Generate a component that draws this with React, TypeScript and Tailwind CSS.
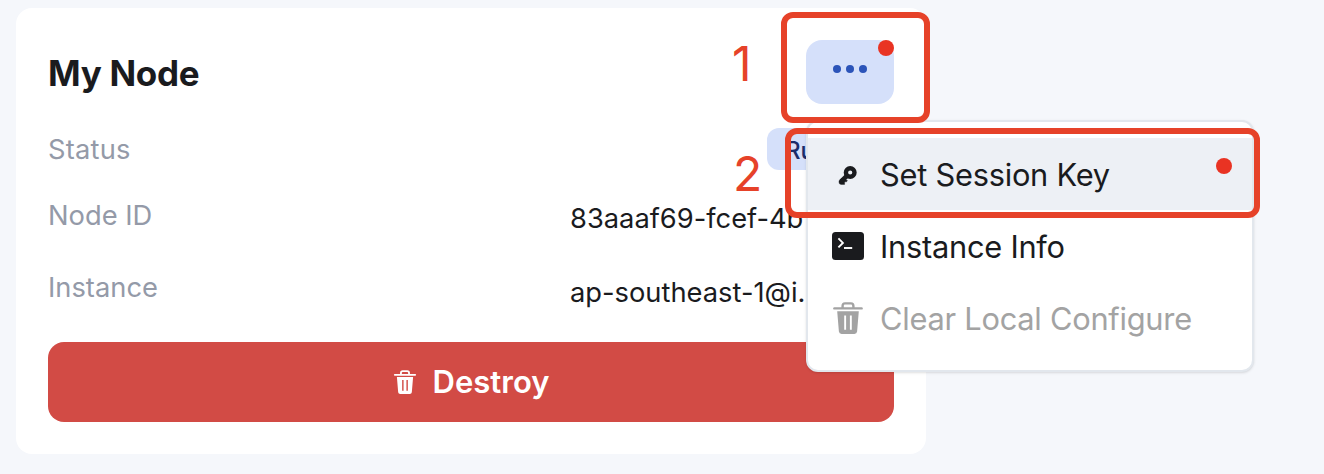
import type { ReactNode } from 'react';

function TrashIcon({ className }: { className: string }) {
  return (
    <svg viewBox="0 0 32 32" className={className} fill="currentColor" aria-hidden="true">
      <path
        fillRule="evenodd"
        d="M5.2 9.2H26.8L25.1 29.5Q24.8 31.9 22.4 31.9H9.6Q7.2 31.9 6.9 29.5ZM12.2 13.4V27.8H14.1V13.4ZM17.9 13.4V27.8H19.8V13.4Z"
      />
      <path d="M2.4 6.4H29.6" fill="none" stroke="currentColor" strokeWidth="2.4" strokeLinecap="round" />
      <path
        d="M10.6 6.3V4Q10.6 1.4 13 1.4H19Q21.4 1.4 21.4 4V6.3"
        fill="none"
        stroke="currentColor"
        strokeWidth="2.4"
      />
    </svg>
  );
}

function KeyIcon() {
  return (
    <svg viewBox="0 0 32 32" className="h-8 w-8" fill="none" stroke="currentColor" aria-hidden="true">
      <circle cx="18.2" cy="14.5" r="4.3" strokeWidth="4.4" />
      <path d="M14.6 18.1L9.2 23.5" strokeWidth="4.6" />
      <path d="M7 22.7L9.8 20.3L15.4 22.4L14.6 23.8H12.6V26.4H9Q7 26.4 7 24.3Z" fill="currentColor" strokeWidth="0.4" />
    </svg>
  );
}

function TerminalIcon() {
  return (
    <svg viewBox="0 0 32 32" className="h-8 w-8" fill="none" aria-hidden="true">
      <rect x="0" y="2" width="32" height="28" rx="3.5" fill="currentColor" />
      <path d="M6.4 8.4L10.9 12.9L6.4 17.4" stroke="white" strokeWidth="1.9" />
      <path d="M12 18H20.2" stroke="white" strokeWidth="1.9" />
    </svg>
  );
}

function MenuItem({ icon, label, active, disabled }: { icon: ReactNode; label: string; active?: boolean; disabled?: boolean }) {
  return (
    <div
      className={`relative flex h-[72px] items-center gap-4 px-6 text-[30.8px] leading-10 tracking-[-0.25px] ${
        active ? 'bg-[#edf0f5]' : ''
      } ${disabled ? 'text-[#a3a3a3]' : 'text-[#1a1b1e]'}`}
    >
      {icon}
      <span className="pt-[2px] whitespace-nowrap">{label}</span>
      {active && <span className="absolute top-5 right-5 h-4 w-4 rounded-full bg-[#e93323]" />}
    </div>
  );
}

export default function App() {
  return (
    <main className="relative h-[474px] w-full overflow-hidden bg-[#f5f7fb] pt-2 pl-4 font-['Inter',sans-serif] text-[#1a1b1e]">
      <section className="h-[446px] w-[910px] rounded-2xl bg-white p-8">
        <header className="flex h-16 items-center justify-between">
          <h1 className="pt-px text-[35px] leading-[48px] font-bold tracking-[-0.3px]">My Node</h1>
          <div className="relative">
            <button className="flex h-16 w-[88px] items-center justify-center gap-[4.6px] rounded-2xl bg-[#d5e0fa] pb-[6px]">
              <i className="h-2 w-2 rounded-full bg-[#2b54b9]" />
              <i className="h-2 w-2 rounded-full bg-[#2b54b9]" />
              <i className="h-2 w-2 rounded-full bg-[#2b54b9]" />
            </button>
            <span className="absolute top-0 right-0 h-4 w-4 rounded-full bg-[#e93323]" />
            <div className="absolute top-20 left-0 z-10 h-[252px] w-[448px] rounded-xl border-2 border-[#e2e7ed] bg-white py-4 shadow-sm">
              <MenuItem icon={<KeyIcon />} label="Set Session Key" active />
              <MenuItem icon={<TerminalIcon />} label="Instance Info" />
              <MenuItem icon={<TrashIcon className="h-8 w-8" />} label="Clear Local Configure" disabled />
            </div>
          </div>
        </header>

        <dl className="mt-6 flex h-[214px] flex-col text-[27.3px] leading-[42px]">
          <div className="flex h-[66px] items-start justify-between">
            <dt className="pt-px tracking-[0.2px] text-[#949aa8]">Status</dt>
            <dd className="h-[42px] w-[127px] overflow-hidden rounded-xl bg-[#d5e0fa] pt-[2px] pl-[18px] text-[24px] font-medium text-[#1b2d6b]">
              Running
            </dd>
          </div>
          <div className="flex h-[72px] items-start justify-between">
            <dt className="pt-px text-[#949aa8]">Node ID</dt>
            <dd className="w-[324px] pt-1">83aaaf69-fcef-4b</dd>
          </div>
          <div className="flex items-start justify-between">
            <dt className="pt-px text-[#949aa8]">Instance</dt>
            <dd className="w-[324px] pt-[6px]">ap-southeast-1@i.</dd>
          </div>
        </dl>

        <button className="flex h-20 w-full items-center justify-center gap-4 rounded-2xl bg-[#d24b45] text-[31px] leading-10 font-semibold text-white">
          <TrashIcon className="h-6 w-6" />
          <span>Destroy</span>
        </button>
      </section>

      <div className="absolute top-3 left-[781px] z-20 h-[111px] w-[149px] rounded-xl border-[6px] border-[#e64229]" />
      <div className="absolute top-[128px] left-[785px] z-20 h-[90px] w-[475px] rounded-xl border-[6px] border-[#e64229]" />
      <span className="absolute top-[34px] left-[732px] z-20 text-[48px] leading-[60px] text-[#e64229]">1</span>
      <span className="absolute top-[144px] left-[733px] z-20 text-[48px] leading-[60px] text-[#e64229]">2</span>
    </main>
  );
}
